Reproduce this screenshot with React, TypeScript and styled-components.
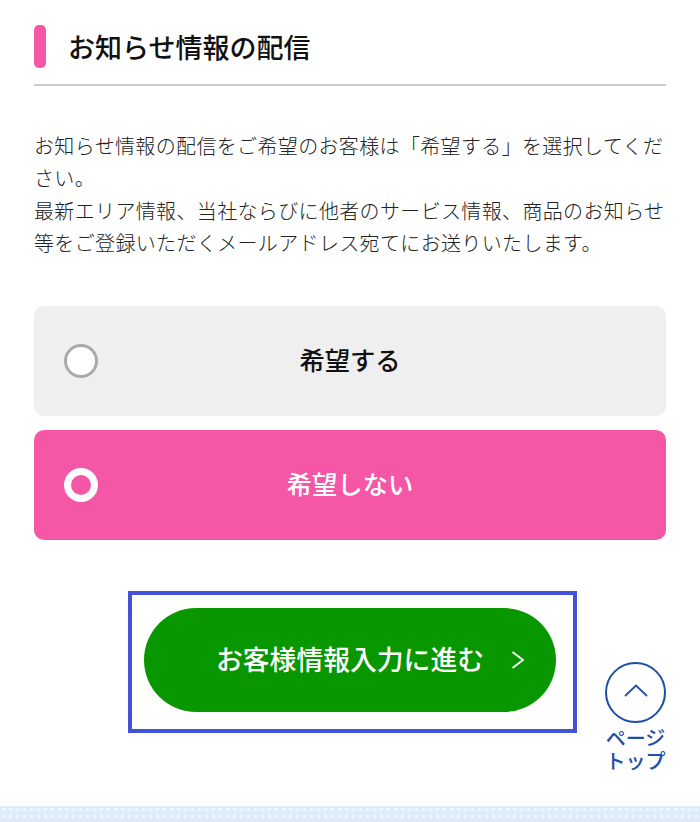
import React, { useState } from "react";
import styled, { createGlobalStyle } from "styled-components";

const GlobalStyle = createGlobalStyle`
  html, body {
    margin: 0;
    padding: 0;
    background: #fff;
  }
  body {
    font-family: "Noto Sans CJK JP", "Noto Sans", sans-serif;
    color: #333;
  }
`;

export default function App() {
  const [wish, setWish] = useState(false);
  return (
    <>
      <GlobalStyle />
      <Page lang="ja">
        <Content>
          <Heading>お知らせ情報の配信</Heading>
          <Lead>
            お知らせ情報の配信をご希望のお客様は「希望する」を選択してください。
            <br />
            最新エリア情報、当社ならびに他者のサービス情報、商品のお知らせ等をご登録いただくメールアドレス宛てにお送りいたします。
          </Lead>
          <Options>
            <Option $on={wish} onClick={() => setWish(true)}>
              <Radio $on={wish} />
              希望する
            </Option>
            <Option $on={!wish} onClick={() => setWish(false)}>
              <Radio $on={!wish} />
              希望しない
            </Option>
          </Options>
          <NextFocus>
            <NextButton type="button">
              お客様情報入力に進む
              <NextArrow viewBox="0 0 16 22" fill="none">
                <path d="M2.5 3 L13 11 L2.5 19" stroke="#fff" strokeWidth="1.8" />
              </NextArrow>
            </NextButton>
          </NextFocus>
        </Content>
        <PageTop href="#">
          <PageTopCircle>
            <svg width="26" height="16" viewBox="0 0 26 16" fill="none">
              <path d="M2 14 L13 3.5 L24 14" stroke="#1e4ea8" strokeWidth="1.8" />
            </svg>
          </PageTopCircle>
          ページ
          <br />
          トップ
        </PageTop>
        <Footer />
      </Page>
    </>
  );
}

const Page = styled.div`
  position: relative;
  width: 700px;
  height: 822px;
  overflow: hidden;
  display: flex;
  flex-direction: column;
  justify-content: space-between;
`;

const Content = styled.main`
  padding: 25px 34px 0;
  display: flex;
  flex-direction: column;
`;

const Heading = styled.h2`
  position: relative;
  margin: 0;
  height: 59px;
  padding-left: 34px;
  border-bottom: 2px solid #ccc;
  font-size: 27px;
  font-weight: 500;
  line-height: 44px;
  color: #111;

  &::before {
    content: "";
    position: absolute;
    left: 0;
    top: 0;
    width: 12px;
    height: 43px;
    border-radius: 5px;
    background: #f556a6;
  }
`;

const Lead = styled.p`
  margin: 44px 0 0;
  font-size: 20px;
  font-weight: 300;
  letter-spacing: 0.35px;
  line-height: 32.4px;
  color: #222;
`;

const Options = styled.div`
  margin-top: 46px;
  display: flex;
  flex-direction: column;
  gap: 14px;
`;

const Option = styled.div<{ $on: boolean }>`
  height: 110px;
  padding: 0 30px 3px;
  box-sizing: border-box;
  border-radius: 10px;
  position: relative;
  display: flex;
  align-items: center;
  justify-content: center;
  font-size: 25.3px;
  font-weight: 500;
  cursor: pointer;
  background: ${(p) => (p.$on ? "#f556a6" : "#efefef")};
  color: ${(p) => (p.$on ? "#fff" : "#111")};
`;

const Radio = styled.span<{ $on: boolean }>`
  position: absolute;
  left: 30px;
  top: 38px;
  box-sizing: border-box;
  width: 34px;
  height: 34px;
  border-radius: 50%;
  background: ${(p) => (p.$on ? "#f556a6" : "#fff")};
  border: ${(p) => (p.$on ? "7px solid #fff" : "3px solid #aaa")};
`;

const NextFocus = styled.div`
  box-sizing: border-box;
  align-self: center;
  margin: 51px 0 0 5px;
  width: 449px;
  height: 142px;
  padding: 13px 17px 0 12px;
  border: 4px solid #4350d8;
`;

const NextButton = styled.button`
  position: relative;
  display: block;
  width: 412px;
  height: 104px;
  padding: 0 0 3px 0;
  border: 0;
  border-radius: 52px;
  background: #099700;
  color: #fff;
  font-family: inherit;
  font-size: 26.8px;
  font-weight: 500;
  cursor: pointer;
`;

const NextArrow = styled.svg`
  position: absolute;
  right: 30px;
  top: 41px;
  width: 16px;
  height: 22px;
`;

const PageTop = styled.a`
  position: absolute;
  left: 600px;
  top: 662px;
  width: 71px;
  text-align: center;
  font-size: 20px;
  font-weight: 500;
  line-height: 23px;
  color: #1e4ea8;
  text-decoration: none;
`;

const PageTopCircle = styled.span`
  box-sizing: border-box;
  display: flex;
  align-items: center;
  justify-content: center;
  width: 61px;
  height: 61px;
  margin: 0 auto 3px;
  padding-bottom: 5px;
  border: 2px solid #1e4ea8;
  border-radius: 50%;
`;

const Footer = styled.footer`
  height: 16px;
  background-color: #deebf8;
  background-image: radial-gradient(circle, #eef5fc 1.4px, transparent 1.6px);
  background-size: 7px 7px;
`;
